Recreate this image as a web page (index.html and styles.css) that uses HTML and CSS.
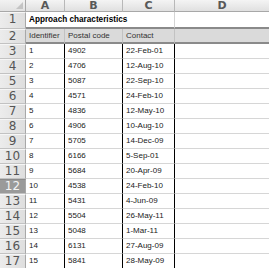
FILE: index.html
```html
<!DOCTYPE html>
<html>
<head>
<meta charset="utf-8">
<link rel="stylesheet" href="styles.css">
</head>
<body>
<div class="sheet">
  <div class="corner"><span class="tri"></span></div>
  <div class="colh">A</div>
  <div class="colh">B</div>
  <div class="colh">C</div>
  <div class="colh last">D</div>

  <div class="rowh">1</div>
  <div class="title">Approach characteristics</div>
  <div class="title-d"></div>

  <div class="rowh">2</div>
  <div class="hd">Identifier</div>
  <div class="hd">Postal code</div>
  <div class="hd">Contact</div>
  <div class="hd last"></div>

  <div class="rowh">3</div><div class="c">1</div><div class="c">4902</div><div class="c">22-Feb-01</div><div class="c d"></div>
  <div class="rowh">4</div><div class="c">2</div><div class="c">4706</div><div class="c">12-Aug-10</div><div class="c d"></div>
  <div class="rowh">5</div><div class="c">3</div><div class="c">5087</div><div class="c">22-Sep-10</div><div class="c d"></div>
  <div class="rowh">6</div><div class="c">4</div><div class="c">4571</div><div class="c">24-Feb-10</div><div class="c d"></div>
  <div class="rowh">7</div><div class="c">5</div><div class="c">4836</div><div class="c">12-May-10</div><div class="c d"></div>
  <div class="rowh">8</div><div class="c">6</div><div class="c">4906</div><div class="c">10-Aug-10</div><div class="c d"></div>
  <div class="rowh">9</div><div class="c">7</div><div class="c">5705</div><div class="c">14-Dec-09</div><div class="c d"></div>
  <div class="rowh">10</div><div class="c">8</div><div class="c">6166</div><div class="c">5-Sep-01</div><div class="c d"></div>
  <div class="rowh">11</div><div class="c">9</div><div class="c">5684</div><div class="c">20-Apr-09</div><div class="c d"></div>
  <div class="rowh sel">12</div><div class="c">10</div><div class="c">4538</div><div class="c">24-Feb-10</div><div class="c d"></div>
  <div class="rowh">13</div><div class="c">11</div><div class="c">5431</div><div class="c">4-Jun-09</div><div class="c d"></div>
  <div class="rowh">14</div><div class="c">12</div><div class="c">5504</div><div class="c">26-May-11</div><div class="c d"></div>
  <div class="rowh">15</div><div class="c">13</div><div class="c">5048</div><div class="c">1-Mar-11</div><div class="c d"></div>
  <div class="rowh">16</div><div class="c">14</div><div class="c">6131</div><div class="c">27-Aug-09</div><div class="c d"></div>
  <div class="rowh">17</div><div class="c">15</div><div class="c">5841</div><div class="c">28-May-09</div><div class="c d"></div>
</div>
</body>
</html>
```

FILE: styles.css
```css
* { box-sizing: border-box; }
html, body { margin: 0; padding: 0; background: #fff; }
body { width: 269px; height: 268px; overflow: hidden; }

.sheet {
  width: 269px;
  display: grid;
  grid-template-columns: 26px 39px 58px 52px 1fr;
  grid-template-rows: 12px 17px 15px repeat(15, 15px);
  font-family: "Liberation Sans", Arial, sans-serif;
}

.corner {
  position: relative;
  background: linear-gradient(#f2f2f2, #e2e2e2);
  border-right: 1px solid #a8a8a8;
  border-bottom: 1px solid #a8a8a8;
}
.tri {
  position: absolute;
  right: 2px;
  bottom: 2px;
  width: 0;
  height: 0;
  border-left: 7px solid transparent;
  border-bottom: 7px solid #c4c4c4;
}

.colh {
  background: linear-gradient(#f4f4f4, #e0e0e0);
  border-right: 1px solid #b8b8b8;
  border-bottom: 1px solid #a8a8a8;
  color: #585858;
  font-family: "DejaVu Sans", sans-serif;
  font-weight: bold;
  font-size: 11px;
  line-height: 11px;
  text-align: center;
}
.colh.last { border-right: none; }

.rowh {
  background: linear-gradient(90deg, #ececec, #dedede);
  border-right: 1px solid #a8a8a8;
  border-bottom: 1px solid #c2c2c2;
  border-top: 1px solid #f6f6f6;
  color: #555;
  font-family: "DejaVu Sans", sans-serif;
  font-size: 12px;
  line-height: 13px;
  text-align: center;
}
.rowh.sel {
  background: #9a9a9a;
  color: #f4f4f4;
  border-top-color: #8a8a8a;
}

.title {
  grid-column: span 3;
  border-right: 1px solid #d4d4d4;
  border-bottom: 2px solid #8a8a8a;
  font-weight: bold;
  font-size: 8.2px;
  line-height: 15px;
  color: #000;
  padding-left: 3px;
}
.title-d {
  border-bottom: 2px solid #8a8a8a;
}

.hd {
  background: #dadada;
  border-right: 1px solid #c2c2c2;
  border-bottom: 2px solid #8a8a8a;
  font-size: 8px;
  line-height: 13px;
  color: #333;
  padding-left: 3px;
}
.hd.last { border-right: none; }

.c {
  border-right: 1px solid #000;
  border-bottom: 1px solid #d6d6d6;
  font-size: 8px;
  line-height: 14px;
  color: #1a1a1a;
  padding-left: 3px;
  white-space: nowrap;
}
.c.d { border-right: none; }
```
